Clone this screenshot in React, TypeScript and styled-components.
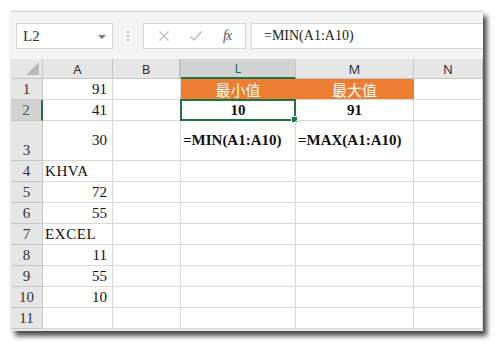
import styled, { createGlobalStyle } from 'styled-components'

const Global = createGlobalStyle`
  body {
    margin: 0;
    background: #ffffff;
    font-family: "Liberation Serif", "Noto Sans CJK TC", serif;
  }
`

const Page = styled.div`
  padding: 11px 0 0 11px;
  width: 503px;
  height: 351px;
  box-sizing: border-box;
`

const Window = styled.div`
  width: 472px;
  height: 320px;
  background: #e6e6e6;
  box-shadow: 4px 5px 5px rgba(0, 0, 0, 0.7), 0 0 3px rgba(0, 0, 0, 0.12);
  overflow: hidden;
`

const Toolbar = styled.div`
  height: 48px;
  box-sizing: border-box;
  background: #f4f4f4;
  border-top: 1px solid #d2d2d2;
  padding: 11px 0 0 5px;
  display: flex;
  align-items: flex-start;
`

const Box = styled.div`
  height: 26px;
  box-sizing: border-box;
  background: #ffffff;
  border: 1px solid #d6d6d6;
  display: flex;
  align-items: center;
`

const NameBox = styled(Box)`
  width: 97px;
  padding: 0 6px 0 6px;
  justify-content: space-between;
  font-family: "Liberation Serif", serif;
  font-size: 15px;
  color: #333;
`

const Caret = styled.span`
  width: 0;
  height: 0;
  border-left: 4px solid transparent;
  border-right: 4px solid transparent;
  border-top: 4px solid #777;
  margin-top: 1px;
`

const Dots = styled.div`
  width: 30px;
  height: 26px;
  display: flex;
  flex-direction: column;
  align-items: center;
  justify-content: center;
  gap: 2px;
  > i {
    width: 2px;
    height: 2px;
    background: #c2c2c2;
  }
`

const FxBox = styled(Box)`
  width: 103px;
  justify-content: space-around;
  padding: 0 4px;
`

const Fx = styled.span`
  font-family: "Liberation Serif", serif;
  font-style: italic;
  font-size: 14px;
  color: #555;
  letter-spacing: -1px;
`

const Formula = styled(Box)`
  flex: 1;
  margin-left: 5px;
  border-right: none;
  padding-left: 12px;
  font-size: 14px;
  color: #222;
`

const Sheet = styled.div`
  display: grid;
  grid-template-columns: 32px 70px 68px 115px 118px 69px;
  grid-template-rows: 20px 21px 21px 40px repeat(8, 21px);
  background: #ffffff;
`

const Corner = styled.div`
  background: #e6e6e6;
  border-right: 1px solid #c6c6c6;
  border-bottom: 1px solid #c6c6c6;
  position: relative;
  &::after {
    content: '';
    position: absolute;
    right: 3px;
    bottom: 3px;
    border-left: 13px solid transparent;
    border-bottom: 13px solid #b9b9b9;
  }
`

const ColHead = styled.div<{ $active?: boolean; $hidden?: boolean }>`
  box-sizing: border-box;
  background: ${(p) => (p.$active ? '#d3d3d3' : '#e6e6e6')};
  border-right: ${(p) => (p.$hidden ? '2px solid #c0c0c0' : '1px solid #c6c6c6')};
  border-bottom: ${(p) => (p.$active ? '2px solid #217346' : '1px solid #c6c6c6')};
  color: ${(p) => (p.$active ? '#217346' : '#333')};
  font-family: "Noto Sans", "Liberation Sans", sans-serif;
  font-size: 13px;
  display: flex;
  align-items: center;
  justify-content: center;
`

const RowHead = styled.div<{ $active?: boolean }>`
  box-sizing: border-box;
  background: ${(p) => (p.$active ? '#d3d3d3' : '#e6e6e6')};
  border-bottom: 1px solid #c6c6c6;
  border-right: ${(p) => (p.$active ? '2px solid #217346' : '1px solid #c6c6c6')};
  color: ${(p) => (p.$active ? '#217346' : '#333')};
  font-size: 15px;
  display: flex;
  align-items: flex-end;
  justify-content: center;
  padding-bottom: 1px;
`

const Cell = styled.div<{
  $align?: 'left' | 'right' | 'center'
  $bold?: boolean
  $fill?: string
  $spaced?: boolean
}>`
  position: relative;
  box-sizing: border-box;
  border-right: 1px solid ${(p) => (p.$fill ? p.$fill : '#d9d9d9')};
  border-bottom: 1px solid #d9d9d9;
  background: ${(p) => p.$fill || 'transparent'};
  color: ${(p) => (p.$fill ? '#ffffff' : '#111')};
  font-family: ${(p) =>
    p.$fill ? '"Noto Sans CJK TC", sans-serif' : '"Liberation Serif", serif'};
  font-size: 15px;
  font-weight: ${(p) => (p.$bold ? 700 : 400)};
  letter-spacing: ${(p) => (p.$spaced ? '0.6px' : 'normal')};
  white-space: nowrap;
  display: flex;
  align-items: center;
  justify-content: ${(p) =>
    p.$align === 'right' ? 'flex-end' : p.$align === 'center' ? 'center' : 'flex-start'};
  padding: 0 ${(p) => (p.$align === 'right' ? '5px' : '2px')} 0 2px;
`

const Selection = styled.span`
  position: absolute;
  left: -1px;
  top: -1px;
  right: -1px;
  bottom: -1px;
  border: 2px solid #217346;
  pointer-events: none;
  &::after {
    content: '';
    position: absolute;
    right: -4px;
    bottom: -4px;
    width: 5px;
    height: 5px;
    background: #217346;
    border: 1px solid #fff;
  }
`

const orange = '#ed7d31'

type Row = { a: string; text?: boolean }

const rows: Row[] = [
  { a: '91' },
  { a: '41' },
  { a: '30' },
  { a: 'KHVA', text: true },
  { a: '72' },
  { a: '55' },
  { a: 'EXCEL', text: true },
  { a: '11' },
  { a: '55' },
  { a: '10' },
  { a: '' },
]

const LM = (i: number) => {
  if (i === 0)
    return [
      <Cell key="l" $align="center" $fill={orange}>最小值</Cell>,
      <Cell key="m" $align="center" $fill={orange}>最大值</Cell>,
    ]
  if (i === 1)
    return [
      <Cell key="l" $align="center" $bold>
        10
        <Selection />
      </Cell>,
      <Cell key="m" $align="center" $bold>91</Cell>,
    ]
  if (i === 2)
    return [
      <Cell key="l" $bold>=MIN(A1:A10)</Cell>,
      <Cell key="m" $bold>=MAX(A1:A10)</Cell>,
    ]
  return [<Cell key="l" />, <Cell key="m" />]
}

const App: React.FC = () => {
  return (
    <>
      <Global />
      <Page>
        <Window>
          <Toolbar>
            <NameBox>
              L2
              <Caret />
            </NameBox>
            <Dots>
              <i />
              <i />
              <i />
            </Dots>
            <FxBox>
              <svg width="12" height="12" viewBox="0 0 12 12">
                <path d="M1.5 1.5 L10.5 10.5 M10.5 1.5 L1.5 10.5" stroke="#bdbdbd" strokeWidth="1.3" />
              </svg>
              <svg width="14" height="12" viewBox="0 0 14 12">
                <path d="M1.5 6.5 L5 10 L12.5 1.5" stroke="#bdbdbd" strokeWidth="1.4" fill="none" />
              </svg>
              <Fx>fx</Fx>
            </FxBox>
            <Formula>=MIN(A1:A10)</Formula>
          </Toolbar>
          <Sheet>
            <Corner />
            <ColHead>A</ColHead>
            <ColHead $hidden>B</ColHead>
            <ColHead $active>L</ColHead>
            <ColHead>M</ColHead>
            <ColHead>N</ColHead>
            {rows.map((r, i) => [
              <RowHead key={`h${i}`} $active={i === 1}>{i + 1}</RowHead>,
              <Cell key={`a${i}`} $align={r.text ? 'left' : 'right'} $spaced={r.text}>
                {r.a}
              </Cell>,
              <Cell key={`b${i}`} />,
              ...LM(i),
              <Cell key={`n${i}`} />,
            ])}
          </Sheet>
        </Window>
      </Page>
    </>
  )
}

export default App
